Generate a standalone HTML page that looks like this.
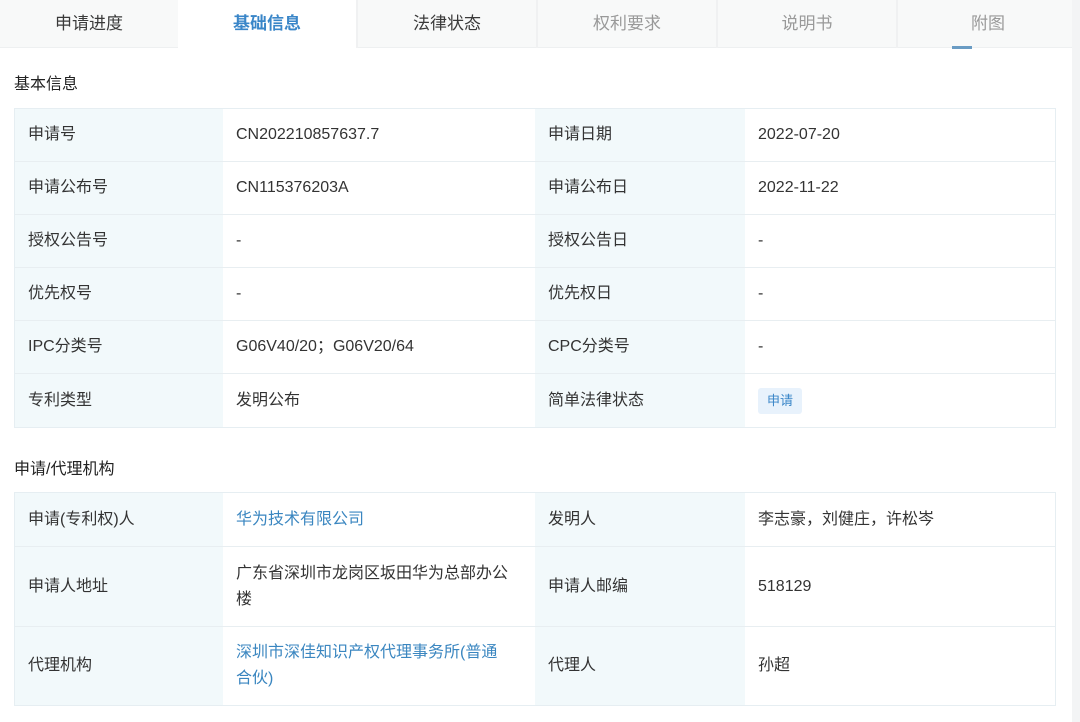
<!DOCTYPE html><html><head><meta charset="utf-8"><style>
*{margin:0;padding:0;box-sizing:border-box}
body{width:1080px;height:722px;background:#fff;font-family:"Liberation Sans","Noto Sans CJK SC",sans-serif;color:#333;position:relative;overflow:hidden;font-size:16px}
.rgt{position:absolute;left:1072px;top:0;width:8px;height:722px;background:#f3f4f5}
.tabs{position:absolute;left:0;top:0;width:1072px;height:48px;background:#f8f9f9;border-bottom:1px solid #eef0f1}
.tab{position:absolute;top:0;height:48px;width:180px;text-align:center;line-height:46px;padding-top:1px;font-size:17px;color:#3a3a3a;border-right:2px solid #f0f1f2}
.tab.a{background:#fff;color:#3a86c8;font-weight:bold}
.tab.g{color:#999}
.ul{position:absolute;left:952px;top:46px;width:20px;height:3px;background:#6a9cc4}
.h{position:absolute;left:14px;font-size:16px;color:#222}
.t{position:absolute;left:14px;width:1042px;border:1px solid #e6eef2;background:#fff}
.r{position:absolute;left:0;width:1040px;border-bottom:1px solid #e8eef1}
.c{position:absolute;top:0;bottom:0;display:flex;align-items:center;padding-left:13px;line-height:26px}
.l{background:#f2f9fb}
.c1{left:0;width:208px}.c2{left:208px;width:312px;padding-right:18px}.c3{left:520px;width:210px}.c4{left:730px;width:310px}
.lk{color:#3a86c0}
.tag{background:#e8f2fc;color:#3a86c8;font-size:13px;padding:0 9px;line-height:26px;border-radius:3px}
</style></head><body>
<div class="rgt"></div>
<div class="tabs">
<div class="tab" style="left:0">申请进度</div>
<div class="tab a" style="left:178px">基础信息</div>
<div class="tab" style="left:358px">法律状态</div>
<div class="tab g" style="left:538px">权利要求</div>
<div class="tab g" style="left:718px">说明书</div>
<div class="tab g" style="left:898px;border:none">附图</div>
<div class="ul"></div>
</div>
<div class="h" style="top:70px">基本信息</div>
<div class="t" style="top:108px;height:320px">
<div class="r" style="top:0;height:53px"><div class="c c1 l">申请号</div><div class="c c2">CN202210857637.7</div><div class="c c3 l">申请日期</div><div class="c c4">2022-07-20</div></div>
<div class="r" style="top:53px;height:53px"><div class="c c1 l">申请公布号</div><div class="c c2">CN115376203A</div><div class="c c3 l">申请公布日</div><div class="c c4">2022-11-22</div></div>
<div class="r" style="top:106px;height:53px"><div class="c c1 l">授权公告号</div><div class="c c2">-</div><div class="c c3 l">授权公告日</div><div class="c c4">-</div></div>
<div class="r" style="top:159px;height:53px"><div class="c c1 l">优先权号</div><div class="c c2">-</div><div class="c c3 l">优先权日</div><div class="c c4">-</div></div>
<div class="r" style="top:212px;height:53px"><div class="c c1 l">IPC分类号</div><div class="c c2">G06V40/20；G06V20/64</div><div class="c c3 l">CPC分类号</div><div class="c c4">-</div></div>
<div class="r" style="top:265px;height:53px;border:none"><div class="c c1 l">专利类型</div><div class="c c2">发明公布</div><div class="c c3 l">简单法律状态</div><div class="c c4"><span class="tag">申请</span></div></div>
</div>
<div class="h" style="top:455px">申请/代理机构</div>
<div class="t" style="top:492px;height:214px">
<div class="r" style="top:0;height:54px"><div class="c c1 l">申请(专利权)人</div><div class="c c2 lk">华为技术有限公司</div><div class="c c3 l">发明人</div><div class="c c4">李志豪，刘健庄，许松岑</div></div>
<div class="r" style="top:54px;height:80px"><div class="c c1 l">申请人地址</div><div class="c c2">广东省深圳市龙岗区坂田华为总部办公楼</div><div class="c c3 l">申请人邮编</div><div class="c c4">518129</div></div>
<div class="r" style="top:134px;height:78px;border:none"><div class="c c1 l">代理机构</div><div class="c c2 lk" style="padding-right:32px">深圳市深佳知识产权代理事务所(普通合伙)</div><div class="c c3 l">代理人</div><div class="c c4">孙超</div></div>
</div>
</body></html>
